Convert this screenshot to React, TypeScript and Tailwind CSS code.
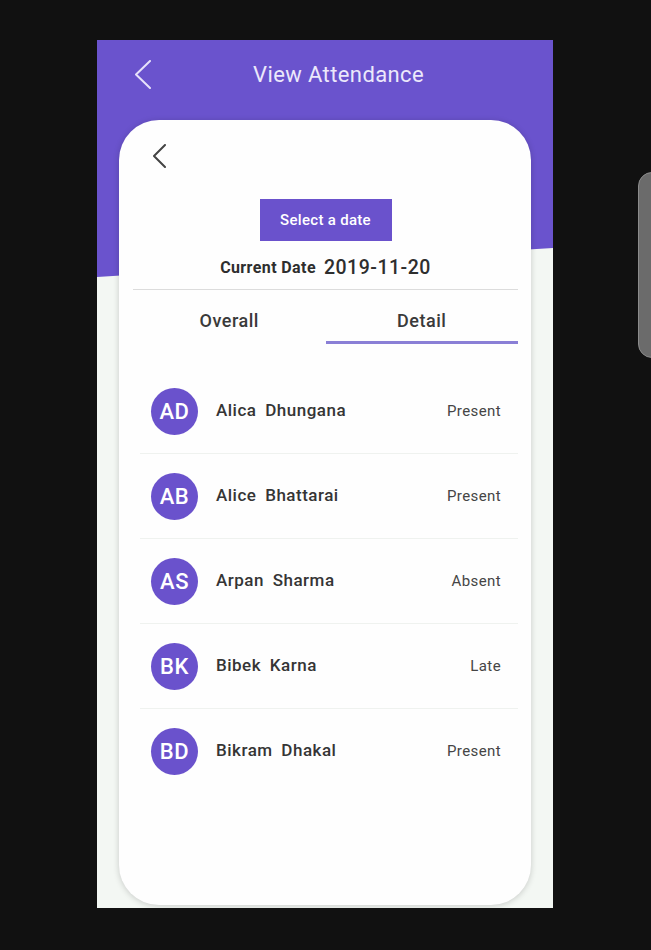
import React from 'react';

type Student = {
  initials: string;
  name: string;
  status: string;
};

const students: Student[] = [
  { initials: 'AD', name: 'Alica Dhungana', status: 'Present' },
  { initials: 'AB', name: 'Alice Bhattarai', status: 'Present' },
  { initials: 'AS', name: 'Arpan Sharma', status: 'Absent' },
  { initials: 'BK', name: 'Bibek Karna', status: 'Late' },
  { initials: 'BD', name: 'Bikram Dhakal', status: 'Present' },
];

const Chevron: React.FC<{ w: number; h: number; color: string; stroke: number }> = ({ w, h, color, stroke }) => (
  <svg width={w} height={h} viewBox={`0 0 ${w} ${h}`} fill="none">
    <polyline
      points={`${w - 1},1 1,${h / 2} ${w - 1},${h - 1}`}
      stroke={color}
      strokeWidth={stroke}
      strokeLinecap="round"
      strokeLinejoin="round"
    />
  </svg>
);

const App: React.FC = () => {
  return (
    <div className="relative w-[651px] h-[950px] bg-[#111111] overflow-hidden font-['Roboto',sans-serif]">
      {/* side handle of the recording */}
      <div className="absolute left-[638px] top-[172px] w-[20px] h-[186px] rounded-l-[14px] bg-[#6b6b6b] border border-[#8c8c8c]" />

      <div className="ml-[97px] pt-[40px]">
        <div className="relative w-[456px] h-[868px] bg-[#f3f7f3] overflow-hidden">
          <div className="absolute inset-x-0 top-0 h-[240px] bg-[#6a53cd] [clip-path:polygon(0_0,100%_0,100%_208px,0_237px)]" />

          <div className="relative h-[66px] flex items-center pl-[38px] pt-[3px]">
            <Chevron w={16} h={29} color="#e7e2fa" stroke={2} />
            <h1 className="ml-[102px] text-[22px] text-[#ece8fb] tracking-[0.4px]">View Attendance</h1>
          </div>

          <div className="relative mt-[14px] mx-[22px] h-[785px] rounded-[40px] bg-[#fefefe] shadow-[0_1px_6px_rgba(0,0,0,0.18)] pl-[14px] pr-[13px]">
            <div className="pt-[24px] pl-[20px]">
              <Chevron w={13} h={24} color="#444444" stroke={2} />
            </div>

            <div className="mt-[31px] flex justify-center">
              <button className="w-[132px] h-[42px] bg-[#6a52cc] text-white text-[15px] font-medium tracking-[0.3px]">Select a date</button>
            </div>

            <div className="mt-[15px] h-[24px] flex items-center justify-center gap-[8px] text-[#2e2e2e]">
              <span className="text-[16px] font-bold tracking-[0.4px]">Current Date</span>
              <span className="text-[19.5px] font-medium tracking-[0.5px]">2019-11-20</span>
            </div>

            <div className="mt-[9px] h-px bg-[#dcdcdc]" />

            <div className="grid grid-cols-2">
              <div>
                <div className="h-[51px] pt-[10px] flex items-center justify-center text-[18px] font-medium text-[#3a3a3a] tracking-[0.5px]">Overall</div>
                <div className="h-[3px]" />
              </div>
              <div>
                <div className="h-[51px] pt-[10px] flex items-center justify-center text-[18px] font-medium text-[#3a3a3a] tracking-[0.5px]">Detail</div>
                <div className="h-[3px] bg-[#8a7fd6]" />
              </div>
            </div>

            <div className="mt-[25px]">
              {students.map((s, i) => (
                <div key={s.initials}>
                  <div className="h-[84px] flex items-center pl-[18px] pr-[17px]">
                    <div className="w-[47px] h-[47px] rounded-full bg-[#6a52cc] flex items-center justify-center text-white text-[22px] font-medium tracking-[0.6px]">
                      {s.initials}
                    </div>
                    <div className="ml-[18px] flex-1 text-[17px] font-medium text-[#353535] tracking-[0.5px] [word-spacing:4px]">{s.name}</div>
                    <div className="text-[15px] text-[#454545] tracking-[0.4px]">{s.status}</div>
                  </div>
                  {i < students.length - 1 && <div className="ml-[7px] h-px bg-[#eff2ef]" />}
                </div>
              ))}
            </div>
          </div>
        </div>
      </div>
    </div>
  );
};

export default App;
